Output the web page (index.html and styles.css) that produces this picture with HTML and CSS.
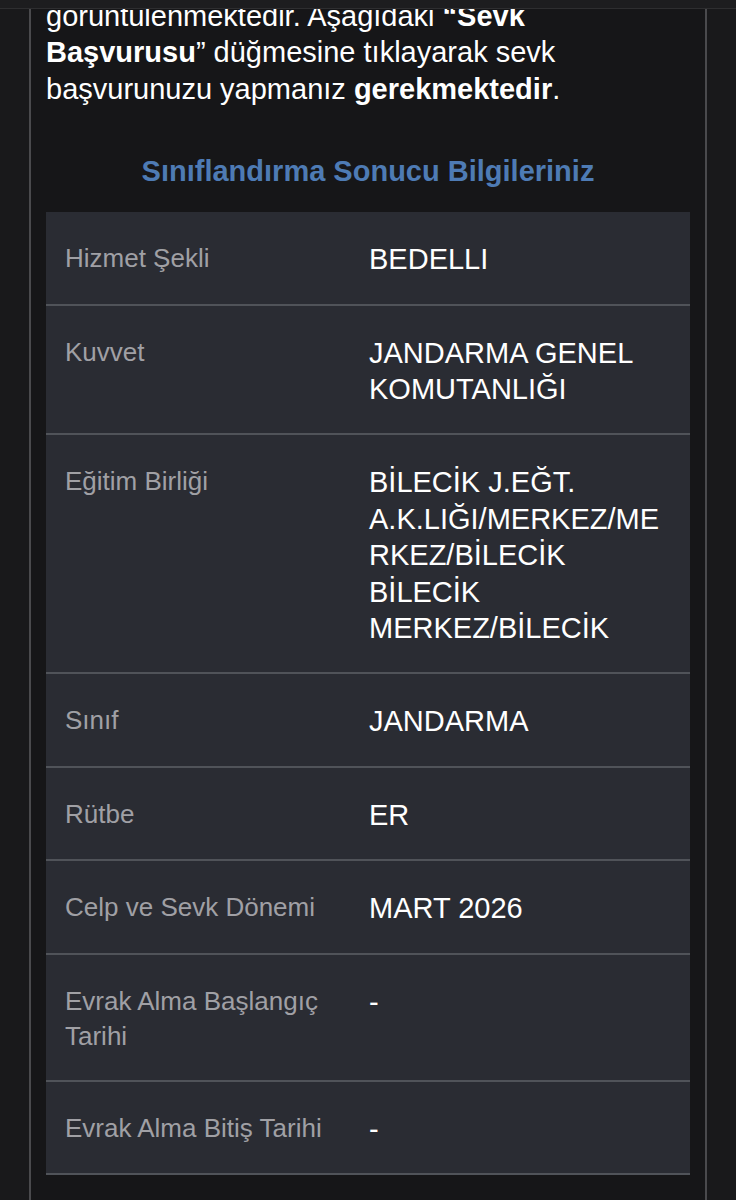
FILE: index.html
```html
<!DOCTYPE html>
<html lang="tr">
<head>
<meta charset="utf-8">
<title>Sınıflandırma Sonucu</title>
<link rel="stylesheet" href="styles.css">
</head>
<body>
<div class="topbar"></div>
<main class="panel">
  <p class="intro">görüntülenmektedir. Aşağıdaki <b>“Sevk Başvurusu</b>” düğmesine tıklayarak sevk başvurunuzu yapmanız <b>gerekmektedir</b>.</p>
  <h2 class="title">Sınıflandırma Sonucu Bilgileriniz</h2>
  <div class="info">
    <div class="row"><div class="label">Hizmet Şekli</div><div class="value">BEDELLI</div></div>
    <div class="row"><div class="label">Kuvvet</div><div class="value">JANDARMA GENEL KOMUTANLIĞI</div></div>
    <div class="row"><div class="label">Eğitim Birliği</div><div class="value">BİLECİK J.EĞT.<br>A.K.LIĞI/MERKEZ/ME<br>RKEZ/BİLECİK<br>BİLECİK<br>MERKEZ/BİLECİK</div></div>
    <div class="row"><div class="label">Sınıf</div><div class="value">JANDARMA</div></div>
    <div class="row"><div class="label">Rütbe</div><div class="value">ER</div></div>
    <div class="row"><div class="label">Celp ve Sevk Dönemi</div><div class="value">MART 2026</div></div>
    <div class="row"><div class="label">Evrak Alma Başlangıç Tarihi</div><div class="value">-</div></div>
    <div class="row"><div class="label">Evrak Alma Bitiş Tarihi</div><div class="value">-</div></div>
  </div>
</main>
</body>
</html>
```
FILE: styles.css
```css
html, body {
  margin: 0;
  padding: 0;
}
body {
  background: #19191b;
  font-family: "Liberation Sans", Arial, Helvetica, sans-serif;
  color: #ffffff;
}
.topbar {
  position: fixed;
  top: 0;
  left: 0;
  right: 0;
  height: 8px;
  background: #1d1d1f;
  border-bottom: 1px solid #2e2e30;
  z-index: 5;
}
.panel {
  margin: 0 29px;
  border-left: 2px solid #4a4a4d;
  border-right: 2px solid #4a4a4d;
  background: #161618;
  padding: 0 15px 40px;
  min-height: 1200px;
  box-sizing: border-box;
}
.intro {
  margin: 0;
  position: relative;
  top: -2px;
  font-size: 29px;
  line-height: 36.4px;
  color: #ffffff;
}
.intro b {
  font-weight: 700;
}
.title {
  margin: 44px 0 23px;
  text-align: center;
  font-size: 29px;
  line-height: 36px;
  font-weight: 700;
  color: #4e7bb4;
}
.info {
  background: #2a2c33;
}
.row {
  display: grid;
  grid-template-columns: 323px 1fr;
  border-bottom: 2px solid #505359;
  padding: 29px 0 26px;
}
.label {
  padding: 0 19px;
  font-size: 26px;
  line-height: 35px;
  color: #a0a0a5;
}
.value {
  padding: 0 19px 0 0;
  font-size: 29px;
  line-height: 36.4px;
  color: #ffffff;
}
```
